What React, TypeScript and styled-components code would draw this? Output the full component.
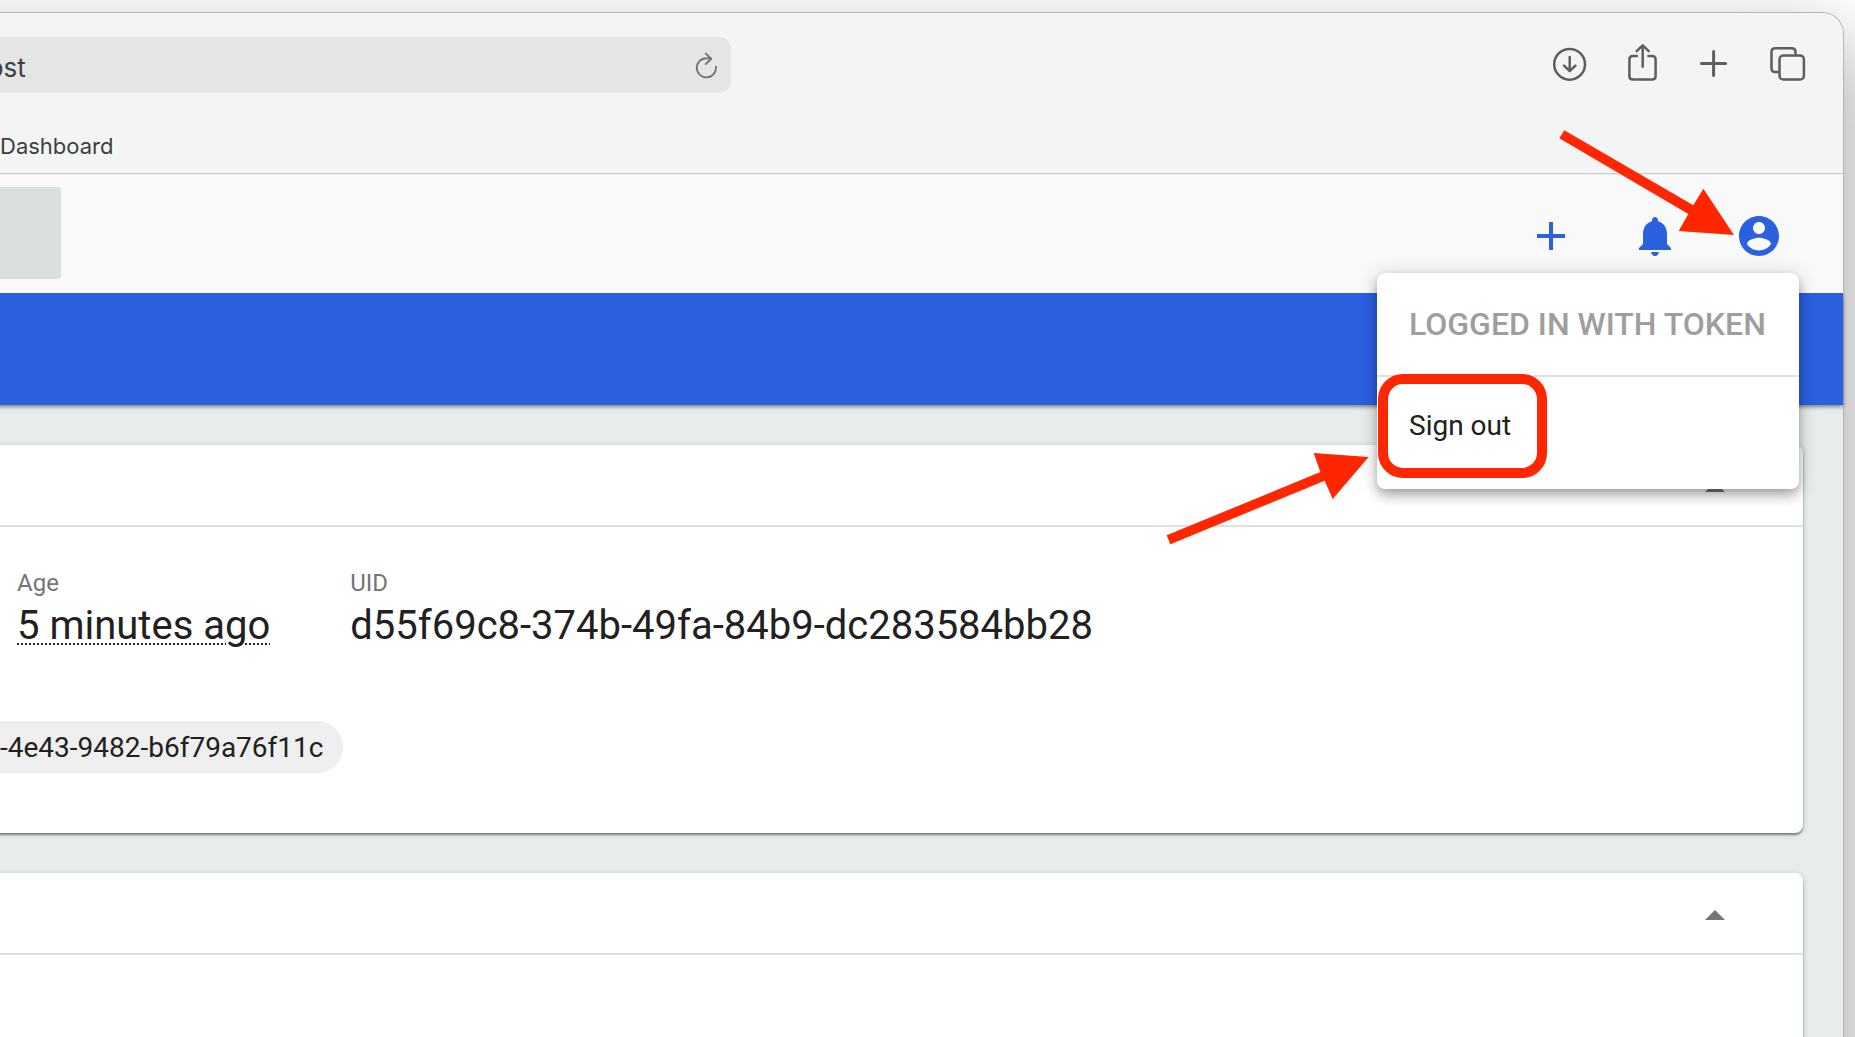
import React from "react";
import styled, { createGlobalStyle } from "styled-components";

const blue = "#2b61e1";
const red = "#ff2600";
const line = "#e0e0e0";

const GlobalStyle = createGlobalStyle`
  *, *::before, *::after { box-sizing: border-box; }
  body { margin: 0; background: #ffffff; font-family: Roboto, "Liberation Sans", sans-serif; color: #212121; }
  button, input { font: inherit; color: inherit; border: 0; padding: 0; margin: 0; outline: none; }
  button { background: none; cursor: pointer; }
  svg { display: block; }
`;

const Desktop = styled.div`
  height: 100vh;
  overflow: hidden;
  padding: 12px 11px 0 0;
`;

const BrowserWindow = styled.div`
  position: relative;
  display: flex;
  flex-direction: column;
  min-height: calc(100vh + 200px);
  margin-left: -120px;
  padding-left: 120px;
  border: 1px solid #b4b4b4;
  border-left: 0;
  border-top-right-radius: 22px;
  background: #e8eced;
  box-shadow: 0 30px 80px rgba(0, 0, 0, 0.4);
`;

const Chrome = styled.div`
  font-family: Inter, "Liberation Sans", sans-serif;
  color: #3d3f3e;
  background: #f3f5f4;
  border-top-right-radius: 21px;
  border-bottom: 1px solid #cccdcd;
  box-shadow: 0 1px 0 #e9eaea;
  padding: 24px 34px 13px 0;
`;

const ToolRow = styled.div`
  display: flex;
  align-items: center;
  justify-content: space-between;
`;

const AddressBar = styled.div`
  display: flex;
  align-items: center;
  justify-content: space-between;
  width: 731px;
  height: 56px;
  padding-right: 11px;
  overflow: hidden;
  border-radius: 0 12px 12px 0;
  background: #e4e6e5;
`;

const AddressInput = styled.input`
  flex: 1;
  min-width: 0;
  height: 56px;
  margin-left: -12px;
  padding-top: 4px;
  font-size: 26px;
  background: transparent;
`;

const IconButton = styled.button`
  display: flex;
  flex: none;
`;

const ReloadButton = styled(IconButton)`
  color: #747675;
`;

const ToolButtons = styled.div`
  display: flex;
  gap: 29px;
  color: #5d5f5e;
`;

const Bookmarks = styled.nav`
  display: flex;
  padding-top: 39px;
`;

const Bookmark = styled.a`
  color: inherit;
  text-decoration: none;
  font-size: 22px;
  line-height: 28px;
`;

const TopBar = styled.header`
  position: relative;
  z-index: 2;
  display: flex;
  align-items: center;
  justify-content: space-between;
  margin-top: 1px;
  padding: 12px 60px 14px 0;
  background: #f9f9f9;
`;

const SearchBox = styled.input`
  width: 61px;
  height: 92px;
  border-radius: 0 4px 4px 0;
  background: #dae0df;
`;

const Actions = styled.div`
  display: flex;
  gap: 56px;
  padding-top: 6px;
  color: ${blue};
`;

const Banner = styled.div`
  position: relative;
  z-index: 1;
  height: 112px;
  margin-left: -20px;
  background: ${blue};
  box-shadow: 0 2px 4px rgba(0, 0, 0, 0.45);
`;

const Menu = styled.div`
  position: absolute;
  top: 98px;
  right: 44px;
  width: 422px;
  padding-bottom: 16px;
  border-radius: 8px;
  background: #ffffff;
  box-shadow: 0 4px 8px -2px rgba(0, 0, 0, 0.2), 0 8px 12px rgba(0, 0, 0, 0.14),
    0 2px 20px rgba(0, 0, 0, 0.2);
`;

const MenuTitle = styled.div`
  display: flex;
  align-items: center;
  height: 104px;
  padding: 0 32px;
  border-bottom: 2px solid ${line};
  font-size: 32px;
  font-weight: 500;
  white-space: nowrap;
  color: #9e9e9e;
`;

const MenuItem = styled.button`
  display: block;
  width: 100%;
  height: 96px;
  padding: 0 32px;
  font-size: 28px;
  text-align: left;
`;

const Highlight = styled.div`
  position: absolute;
  top: 101px;
  left: 1px;
  width: 169px;
  height: 104px;
  border: 10px solid ${red};
  border-radius: 25px;
  pointer-events: none;
`;

const Arrow = styled.svg<{ $top: number; $right: number }>`
  position: absolute;
  z-index: 3;
  top: ${(p) => p.$top}px;
  right: ${(p) => p.$right}px;
  fill: ${red};
  pointer-events: none;
`;

const Content = styled.main`
  display: flex;
  flex: 1;
  flex-direction: column;
  gap: 40px;
  padding: 40px 40px 0 0;
`;

const Card = styled.section<{ $grow?: boolean }>`
  flex: ${(p) => (p.$grow ? 1 : "none")};
  margin-left: -20px;
  border-radius: 8px;
  background: #ffffff;
  box-shadow: 0 2px 2px rgba(0, 0, 0, 0.4), 0 1px 6px rgba(0, 0, 0, 0.16);
`;

const CardHeader = styled.div`
  display: flex;
  justify-content: flex-end;
  padding: 19px 64px 13px 0;
  border-bottom: 2px solid ${line};
  color: #757575;
`;

const CardBody = styled.div`
  padding: 40px 20px 60px;
`;

const Properties = styled.dl`
  display: flex;
  gap: 80px;
  margin: 0;
  padding-left: 17px;
`;

const Term = styled.dt`
  font-size: 24px;
  line-height: 32px;
  color: #757575;
`;

const Value = styled.dd`
  margin: 0;
  font-size: 40px;
  line-height: 54px;
`;

const Relative = styled.span`
  text-decoration: underline dotted 2px;
  text-underline-offset: 4px;
`;

const ChipRow = styled.div`
  display: flex;
  padding-top: 68px;
`;

const Chip = styled.div`
  padding: 2px 20px 0 0;
  border-radius: 0 26px 26px 0;
  background: #efefef;
  font-size: 28px;
  line-height: 50px;
`;

function LineIcon({ size, width, children }: { size: number; width: number; children: React.ReactNode }) {
  return (
    <svg width={size} height={size} viewBox={`0 0 ${size} ${size}`} fill="none" stroke="currentColor"
      strokeWidth={width} strokeLinecap="round" strokeLinejoin="round" aria-hidden="true">
      {children}
    </svg>
  );
}

function MaterialIcon({ d }: { d: string }) {
  return (
    <svg width="48" height="48" viewBox="0 0 24 24" fill="currentColor" aria-hidden="true">
      <path d={d} />
    </svg>
  );
}

function CollapseButton() {
  return (
    <IconButton aria-label="Collapse">
      <MaterialIcon d="M7 14l5-5 5 5z" />
    </IconButton>
  );
}

export default function App() {
  return (
    <>
      <GlobalStyle />
      <Desktop>
        <BrowserWindow>
          <Chrome>
            <ToolRow>
              <AddressBar>
                <AddressInput aria-label="Address" defaultValue="ost" />
                <ReloadButton aria-label="Reload">
                  <LineIcon size={28} width={1.9}>
                    <path d="M24 15.6V16.7A9.6 9.6 0 1 1 14.4 7.2Q16.6 7.1 19 7.7" />
                    <path d="M13.8 2.6L19.2 7.7L13.8 13" />
                  </LineIcon>
                </ReloadButton>
              </AddressBar>
              <ToolButtons>
                <IconButton aria-label="Downloads">
                  <LineIcon size={44} width={2.5}>
                    <circle cx="23.6" cy="21.3" r="15.4" />
                    <path d="M23.7 14V28M18 22.6L23.7 28.2L29.4 22.6" />
                  </LineIcon>
                </IconButton>
                <IconButton aria-label="Share">
                  <LineIcon size={44} width={2.5}>
                    <path d="M17.8 13H14Q10.4 13 10.4 16.6V33Q10.4 36.6 14 36.6H33Q36.6 36.6 36.6 33V16.6Q36.6 13 33 13H29.4" />
                    <path d="M23.7 23.8V2.4M17.7 8.2L23.7 2.4L29.7 8.2" />
                  </LineIcon>
                </IconButton>
                <IconButton aria-label="New tab">
                  <LineIcon size={44} width={3}>
                    <path d="M9.4 20.4H33.6M21.6 8.4V32.4" />
                  </LineIcon>
                </IconButton>
                <IconButton aria-label="Show tabs">
                  <LineIcon size={44} width={2.5}>
                    <rect x="14.5" y="12.5" width="24.4" height="24" rx="3.8" />
                    <path d="M14 29H10.3Q6.5 29 6.5 25.2V9Q6.5 5.2 10.3 5.2H26.7Q30.5 5.2 30.5 9V12" />
                  </LineIcon>
                </IconButton>
              </ToolButtons>
            </ToolRow>
            <Bookmarks>
              <Bookmark href="#">Dashboard</Bookmark>
            </Bookmarks>
          </Chrome>

          <TopBar>
            <SearchBox aria-label="Search" />
            <Actions>
              <IconButton aria-label="Create">
                <MaterialIcon d="M19 13h-6v6h-2v-6H5v-2h6V5h2v6h6v2z" />
              </IconButton>
              <IconButton aria-label="Notifications">
                <MaterialIcon d="M12 22c.9 0 1.7-.6 2-2h-4c.3 1.400 1.100 2 2 2zM18 16v-5c0-3.070-1.640-5.640-4.500-6.320V4c0-.83-.67-1.500-1.500-1.500s-1.500.67-1.500 1.500v.68C7.630 5.360 6 7.920 6 11v5l-2 2v1h16v-1l-2-2z" />
              </IconButton>
              <IconButton aria-label="Account">
                <MaterialIcon d="M12 2C6.480 2 2 6.480 2 12s4.480 10 10 10 10-4.480 10-10S17.520 2 12 2zm0 3c1.660 0 3 1.340 3 3s-1.340 3-3 3-3-1.340-3-3 1.340-3 3-3zm0 14.200c-2.500 0-4.710-1.280-6-3.220.03-1.990 4-3.080 6-3.080 1.990 0 5.970 1.090 6 3.080-1.290 1.940-3.500 3.220-6 3.220z" />
              </IconButton>
            </Actions>
            <Menu>
              <MenuTitle>LOGGED IN WITH TOKEN</MenuTitle>
              <MenuItem>Sign out</MenuItem>
              <Highlight />
            </Menu>
          </TopBar>

          <Banner />

          <Content>
            <Card>
              <CardHeader>
                <CollapseButton />
              </CardHeader>
              <CardBody>
                <Properties>
                  <div>
                    <Term>Age</Term>
                    <Value>
                      <Relative>5 minutes ago</Relative>
                    </Value>
                  </div>
                  <div>
                    <Term>UID</Term>
                    <Value>d55f69c8-374b-49fa-84b9-dc283584bb28</Value>
                  </div>
                </Properties>
                <ChipRow>
                  <Chip>-4e43-9482-b6f79a76f11c</Chip>
                </ChipRow>
              </CardBody>
            </Card>
            <Card $grow>
              <CardHeader>
                <CollapseButton />
              </CardHeader>
            </Card>
          </Content>

          <Arrow $top={117} $right={109} width="175" height="106" viewBox="0 0 525 318" aria-hidden="true">
            <path d="M1 25L16 1L403 226L433 176L525 315L359 303L388 252Z" />
          </Arrow>
          <Arrow $top={440} $right={474} width="203" height="92" viewBox="0 0 609 276" aria-hidden="true">
            <path d="M2 247L463 57L443 0L608 12L500 138L476 83L13 274Z" />
          </Arrow>
        </BrowserWindow>
      </Desktop>
    </>
  );
}
